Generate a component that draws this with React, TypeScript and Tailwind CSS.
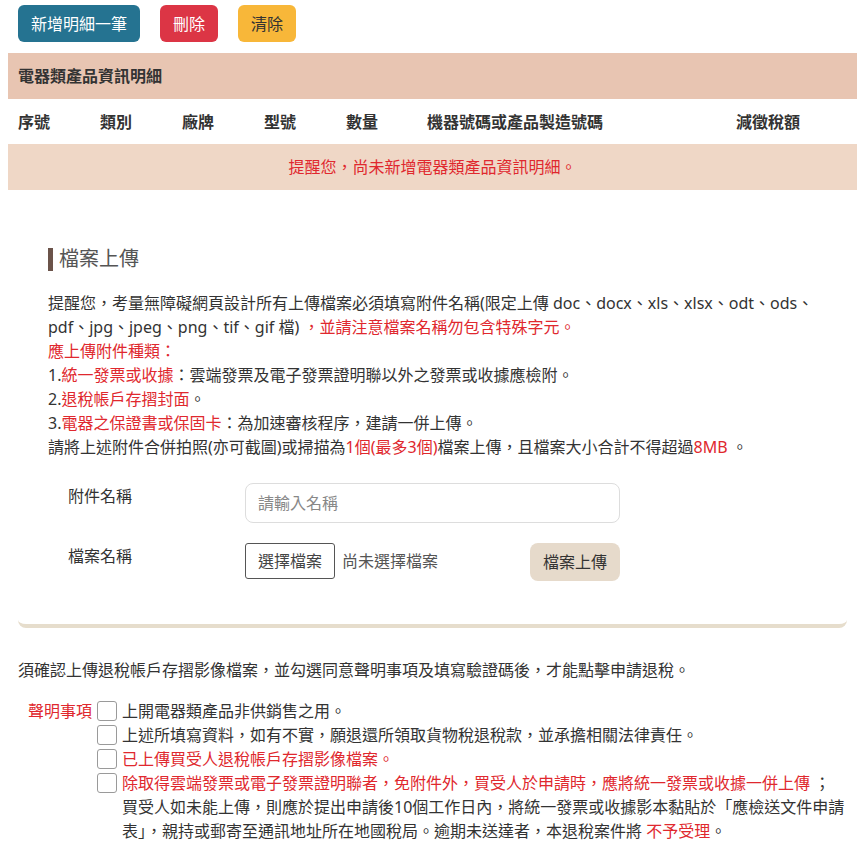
import React from 'react';

const FONT = { fontFamily: '"Noto Sans", "Noto Sans CJK TC", sans-serif' };

const COLUMNS = ['序號', '類別', '廠牌', '型號', '數量', '機器號碼或產品製造號碼', '減徵稅額'];

function Red({ children }: { children: React.ReactNode }) {
  return <span className="text-[#e0282e]">{children}</span>;
}

function Checkbox() {
  return (
    <span className="mt-[2px] inline-block h-5 w-5 shrink-0 rounded-[3px] border border-[#9a9a9a] bg-white" />
  );
}

export default function App() {
  return (
    <div className="min-h-[851px] bg-white text-[16px] text-[#333]" style={FONT}>
      {/* toolbar */}
      <div className="flex gap-5 px-[18px] pt-[5px]">
        <button className="h-[37px] rounded-md bg-[#257391] px-[13px] text-white">新增明細一筆</button>
        <button className="h-[37px] rounded-md bg-[#dc3545] px-[13px] text-white">刪除</button>
        <button className="h-[37px] rounded-md bg-[#f8b739] px-[13px] text-[#333]">清除</button>
      </div>

      {/* detail table */}
      <div className="mx-2 mt-[11px]">
        <div className="flex h-[46px] items-center bg-[#e8c5b2] px-[10px] font-bold">電器類產品資訊明細</div>
        <div className="grid h-[45px] grid-cols-[82px_82px_82px_82px_81px_309px_1fr] items-center px-[10px] font-bold">
          {COLUMNS.map((c) => (
            <div key={c}>{c}</div>
          ))}
        </div>
        <div className="flex h-[46px] items-center justify-center bg-[#efd7c6] text-[#e0282e]">
          提醒您，尚未新增電器類產品資訊明細。
        </div>
      </div>

      {/* upload card */}
      <div className="mx-[18px] mt-[20px] rounded-b-lg border-b-4 border-[#e6ddcc] px-[30px] pb-[43px] pt-[37px]">
        <h2 className="flex items-center gap-[6px] text-[20px] leading-[24px] text-[#555]">
          <span className="inline-block h-[23px] w-[5px] bg-[#6b534a]" />
          檔案上傳
        </h2>

        <div className="mt-[20px] leading-6">
          <p>
            提醒您，考量無障礙網頁設計所有上傳檔案必須填寫附件名稱(限定上傳 doc、docx、xls、xlsx、odt、ods、pdf、jpg、jpeg、png、tif、gif 檔)
            <Red> ，並請注意檔案名稱勿包含特殊字元。</Red>
          </p>
          <p>
            <Red>應上傳附件種類：</Red>
          </p>
          <p>
            1.<Red>統一發票或收據</Red>：雲端發票及電子發票證明聯以外之發票或收據應檢附。
          </p>
          <p>
            2.<Red>退稅帳戶存摺封面</Red>。
          </p>
          <p>
            3.<Red>電器之保證書或保固卡</Red>：為加速審核程序，建請一併上傳。
          </p>
          <p>
            請將上述附件合併拍照(亦可截圖)或掃描為<Red>1個(最多3個)</Red>檔案上傳，且檔案大小合計不得超過<Red>8MB</Red> 。
          </p>
        </div>

        <div className="mt-[24px] flex flex-col gap-5 pl-5">
          <div className="flex items-start">
            <label className="w-[177px] pt-[1px]">附件名稱</label>
            <input
              className="h-10 w-[375px] rounded-lg border border-[#ddd] px-3 text-[16px] placeholder:text-[#888] focus:outline-none"
              placeholder="請輸入名稱"
              style={FONT}
            />
          </div>
          <div className="flex items-start">
            <label className="w-[177px] pt-[1px]">檔案名稱</label>
            <div className="flex w-[285px] items-center">
              <span className="flex h-9 items-center rounded-[3px] border border-[#555] px-[12px] text-[#444]">選擇檔案</span>
              <span className="ml-[7px] text-[#555]">尚未選擇檔案</span>
            </div>
            <button className="h-[38px] rounded-lg bg-[#e6dacb] px-[13px] text-[#333]">檔案上傳</button>
          </div>
        </div>
      </div>

      {/* declarations */}
      <p className="mx-[18px] mt-[30px] leading-6">
        須確認上傳退稅帳戶存摺影像檔案，並勾選同意聲明事項及填寫驗證碼後，才能點擊申請退稅。
      </p>

      <div className="mt-[17px] flex pl-[28px] pr-[18px] leading-6">
        <div className="w-[69px] shrink-0 text-[#e0282e]">聲明事項</div>
        <div className="flex flex-col">
          <div className="flex gap-[5px]">
            <Checkbox />
            <span>上開電器類產品非供銷售之用。</span>
          </div>
          <div className="flex gap-[5px]">
            <Checkbox />
            <span>上述所填寫資料，如有不實，願退還所領取貨物稅退稅款，並承擔相關法律責任。</span>
          </div>
          <div className="flex gap-[5px]">
            <Checkbox />
            <Red>已上傳買受人退稅帳戶存摺影像檔案。</Red>
          </div>
          <div className="flex gap-[5px]">
            <Checkbox />
            <span>
              <Red>除取得雲端發票或電子發票證明聯者，免附件外，買受人於申請時，應將統一發票或收據一併上傳</Red> ；
              <br />
              買受人如未能上傳，則應於提出申請後10個工作日內，將統一發票或收據影本黏貼於「應檢送文件申請表」，親持或郵寄至通訊地址所在地國稅局。逾期未送達者，本退稅案件將
              <Red> 不予受理</Red>。
            </span>
          </div>
        </div>
      </div>
    </div>
  );
}
